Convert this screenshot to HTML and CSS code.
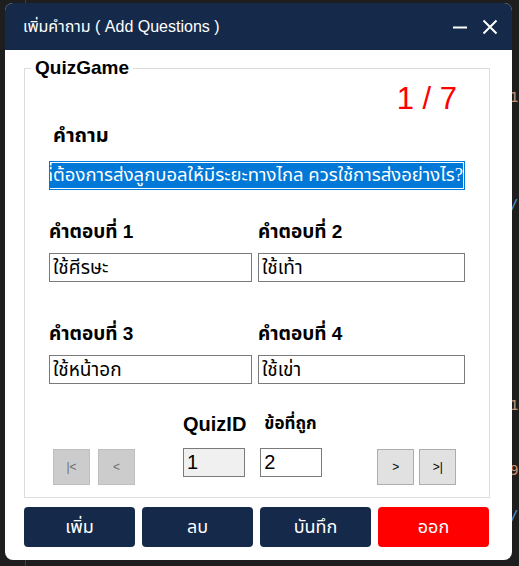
FILE: index.html
```html
<!DOCTYPE html>
<html lang="th">
<head>
<meta charset="utf-8">
<title>เพิ่มคำถาม ( Add Questions )</title>
<link rel="stylesheet" href="styles.css">
</head>
<body>
<div class="bgcode">
  <span class="c1 o">1.</span>
  <span class="c2 b">/.</span>
  <span class="c3 o">1.</span>
  <span class="c4 o">95</span>
  <span class="c5 b">/.</span>
</div>
<div class="window">
  <div class="titlebar">
    <span class="title">เพิ่มคำถาม ( Add Questions )</span>
    <div class="controls">
      <svg class="ctl" width="16" height="16" viewBox="0 0 16 16"><path d="M1 8.5H15" stroke="#fff" stroke-width="2"/></svg>
      <svg class="ctl" width="16" height="16" viewBox="0 0 16 16"><path d="M1.5 1.5L14.5 14.5M14.5 1.5L1.5 14.5" stroke="#fff" stroke-width="2"/></svg>
    </div>
  </div>
  <div class="content">
    <div class="group">
      <span class="legend">QuizGame</span>
      <div class="counter">1 / 7</div>
      <div class="qlabel">คำถาม</div>
      <div class="qinput"><span class="sel">ถ้าผู้เล่นฟุตบอลที่ต้องการส่งลูกบอลให้มีระยะทางไกล ควรใช้การส่งอย่างไร?</span></div>
      <div class="answers">
        <div class="alabel">คำตอบที่ 1</div>
        <div class="alabel">คำตอบที่ 2</div>
        <div class="ainput">ใช้ศีรษะ</div>
        <div class="ainput">ใช้เท้า</div>
        <div class="alabel second">คำตอบที่ 3</div>
        <div class="alabel second">คำตอบที่ 4</div>
        <div class="ainput">ใช้หน้าอก</div>
        <div class="ainput">ใช้เข่า</div>
      </div>
      <div class="navrow">
        <div class="navleft">
          <div class="nbtn dis">|&lt;</div>
          <div class="nbtn dis">&lt;</div>
        </div>
        <div class="fields">
          <div class="field">
            <div class="flabel">QuizID</div>
            <div class="finput ro">1</div>
          </div>
          <div class="field">
            <div class="flabel th">ข้อที่ถูก</div>
            <div class="finput">2</div>
          </div>
        </div>
        <div class="navright">
          <div class="nbtn">&gt;</div>
          <div class="nbtn">&gt;|</div>
        </div>
      </div>
    </div>
    <div class="actions">
      <div class="abtn">เพิ่ม</div>
      <div class="abtn">ลบ</div>
      <div class="abtn">บันทึก</div>
      <div class="abtn red">ออก</div>
    </div>
  </div>
</div>
</body>
</html>
```
FILE: styles.css
```css
html, body {
  margin: 0;
  padding: 0;
}
body {
  width: 519px;
  height: 566px;
  overflow: hidden;
  position: relative;
  background: #1e1e1e linear-gradient(to right, transparent 25px, #404040 25px, #404040 26px, transparent 26px);
  font-family: "Liberation Sans", Tahoma, "Noto Sans Thai", Loma, Garuda, "DejaVu Sans", sans-serif;
}
.bgcode {
  position: absolute;
  left: 0;
  top: 0;
  width: 519px;
  height: 566px;
  font-family: "DejaVu Sans Mono", monospace;
  font-size: 14px;
  overflow: hidden;
}
.bgcode span { position: absolute; left: 510px; }
.bgcode .o { color: #ce9178; }
.bgcode .b { color: #569cd6; }
.c1 { top: 89px; }
.c2 { top: 196px; }
.c3 { top: 397px; }
.c4 { top: 462px; }
.c5 { top: 507px; }

.window {
  position: relative;
  margin: 3px 0 0 5px;
  width: 507px;
  height: 557px;
  background: #ffffff;
  border-radius: 8px;
  overflow: hidden;
}
.titlebar {
  height: 47px;
  background: #152a4b;
  display: flex;
  align-items: center;
  justify-content: space-between;
  padding: 0 14px 0 18px;
  color: #fff;
}
.title {
  font-size: 16px;
  padding-top: 1px;
}
.controls {
  display: flex;
  gap: 14px;
  align-items: center;
}
.ctl { display: block; }

.content {
  padding: 18px 0 0 19px;
}
.group {
  position: relative;
  box-sizing: border-box;
  width: 466px;
  height: 430px;
  border: 1px solid #dcdcdc;
}
.legend {
  position: absolute;
  left: 6px;
  top: -12px;
  padding: 0 4px;
  background: #fff;
  font-weight: bold;
  font-size: 19px;
  line-height: 22px;
  color: #000;
}
.counter {
  margin-top: 14px;
  height: 32px;
  line-height: 32px;
  text-align: right;
  padding-right: 32px;
  font-size: 31px;
  color: #ff0000;
}
.qlabel {
  margin: 8px 0 0 28px;
  height: 24px;
  line-height: 24px;
  font-size: 20px;
  font-weight: bold;
  color: #000;
}
.qinput {
  margin: 14px 0 0 24px;
  box-sizing: border-box;
  width: 416px;
  height: 29px;
  border: 1px solid #0078d7;
  padding: 1px;
  overflow: hidden;
  display: flex;
  justify-content: flex-end;
}
.sel {
  display: block;
  background: #0078d7;
  color: #fff;
  white-space: nowrap;
  font-family: "Liberation Serif", Tahoma, "Noto Sans Thai", Loma, Garuda, serif;
  font-size: 18.5px;
  line-height: 25px;
}
.answers {
  margin: 30px 0 0 24px;
  display: grid;
  grid-template-columns: 203px 207px;
  column-gap: 6px;
}
.alabel {
  height: 24px;
  line-height: 24px;
  font-size: 19px;
  font-weight: bold;
  color: #000;
  margin-bottom: 9px;
}
.alabel.second { margin-top: 40px; }
.ainput {
  box-sizing: border-box;
  height: 29px;
  border: 1px solid #7a7a7a;
  padding: 0 3px;
  font-family: "Liberation Serif", Tahoma, "Noto Sans Thai", Loma, Garuda, serif;
  font-size: 19px;
  line-height: 27px;
  color: #000;
  white-space: nowrap;
  overflow: hidden;
}
.navrow {
  margin-top: 28px;
  display: flex;
  align-items: flex-end;
  padding-left: 28px;
}
.navleft, .navright {
  display: flex;
  gap: 8px;
  margin-bottom: -8px;
}
.navright { margin-left: 55px; gap: 5px; }
.nbtn {
  box-sizing: border-box;
  width: 37px;
  height: 36px;
  border: 1px solid #adadad;
  background: #e1e1e1;
  font-size: 12px;
  line-height: 34px;
  text-align: center;
  color: #000;
}
.nbtn.dis {
  background: #cccccc;
  border-color: #bfbfbf;
  color: #6d6d6d;
}
.fields {
  display: flex;
  gap: 14px;
  margin-left: 48px;
}
.field {
  display: flex;
  flex-direction: column;
  gap: 12px;
}
.flabel {
  height: 24px;
  line-height: 24px;
  font-size: 20px;
  font-weight: bold;
  color: #000;
}
.flabel.th { font-size: 17px; margin-left: 4px; }
.finput {
  box-sizing: border-box;
  width: 62px;
  height: 29px;
  border: 1px solid #7a7a7a;
  background: #fff;
  padding: 0 3px;
  font-size: 20px;
  line-height: 27px;
  color: #000;
}
.finput.ro { background: #f0f0f0; }

.actions {
  margin-top: 9px;
  display: grid;
  grid-template-columns: repeat(4, 111px);
  column-gap: 7px;
}
.abtn {
  height: 40px;
  border-radius: 4px;
  background: #152a4b;
  color: #fff;
  font-size: 18px;
  line-height: 40px;
  text-align: center;
}
.abtn.red { background: #ff0000; }
```
